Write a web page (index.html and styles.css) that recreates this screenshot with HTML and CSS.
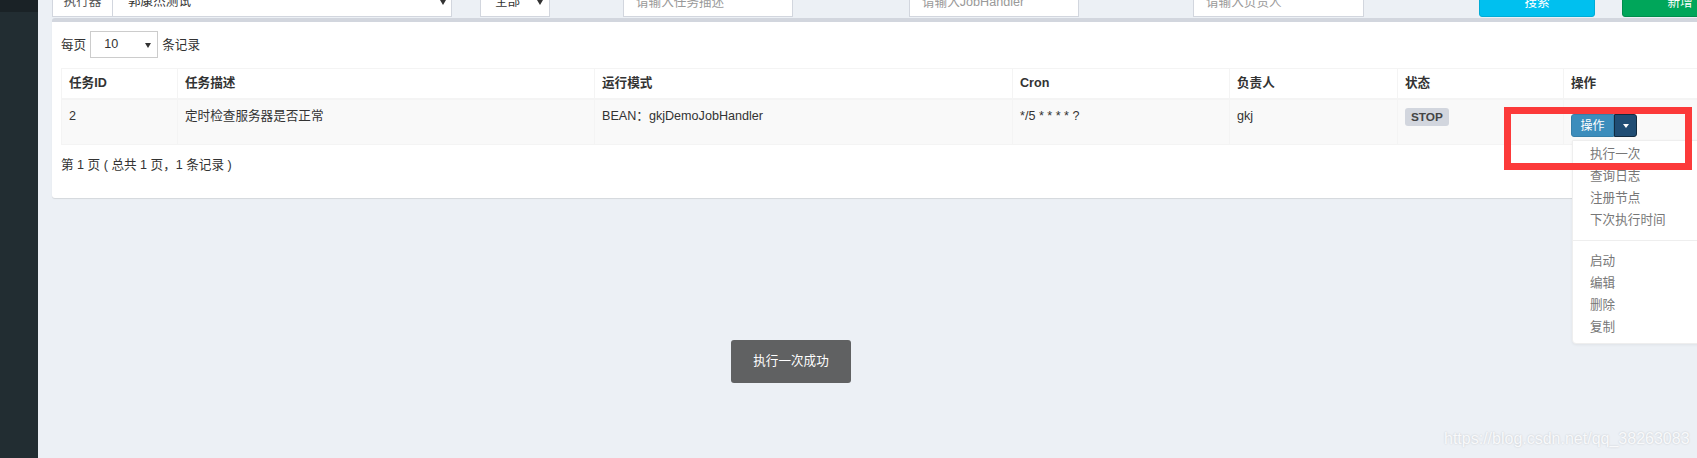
FILE: index.html
```html
<!DOCTYPE html>
<html lang="zh-CN">
<head>
    <meta charset="UTF-8">
    <title>任务管理</title>
    <link rel="stylesheet" href="styles.css">
</head>
<body>
    <div class="wrapper">
        <aside class="sidebar">
            <div class="sidebar-top"></div>
        </aside>
        <main class="content">
            <!-- 查询条件 -->
            <div class="filter-bar">
                <div class="input-group">
                    <span class="addon">执行器</span>
                    <div class="select select-group">郭康杰测试</div>
                </div>
                <div class="select select-status">全部</div>
                <input class="form-control f-desc" type="text" placeholder="请输入任务描述">
                <input class="form-control f-handler" type="text" placeholder="请输入JobHandler">
                <input class="form-control f-author" type="text" placeholder="请输入负责人">
                <button class="btn btn-info">搜索</button>
                <button class="btn btn-success">新增</button>
            </div>

            <div class="box">
                <div class="length-row">
                    <span>每页</span>
                    <div class="select select-sm">10</div>
                    <span>条记录</span>
                </div>
                <table class="job-table">
                    <colgroup>
                        <col class="c-id">
                        <col class="c-desc">
                        <col class="c-mode">
                        <col class="c-cron">
                        <col class="c-author">
                        <col class="c-status">
                        <col>
                    </colgroup>
                    <thead>
                        <tr>
                            <th>任务ID</th>
                            <th>任务描述</th>
                            <th>运行模式</th>
                            <th>Cron</th>
                            <th>负责人</th>
                            <th>状态</th>
                            <th>操作</th>
                        </tr>
                    </thead>
                    <tbody>
                        <tr>
                            <td>2</td>
                            <td>定时检查服务器是否正常</td>
                            <td>BEAN：gkjDemoJobHandler</td>
                            <td>*/5 * * * * ?</td>
                            <td>gkj</td>
                            <td><span class="label">STOP</span></td>
                            <td>
                                <div class="btn-group">
                                    <button class="btn-op">操作</button>
                                    <button class="btn-caret"><span class="caret"></span></button>
                                    <ul class="dropdown-menu">
                                        <li>执行一次</li>
                                        <li>查询日志</li>
                                        <li>注册节点</li>
                                        <li>下次执行时间</li>
                                        <li class="divider"></li>
                                        <li>启动</li>
                                        <li>编辑</li>
                                        <li>删除</li>
                                        <li>复制</li>
                                    </ul>
                                </div>
                            </td>
                        </tr>
                    </tbody>
                </table>
                <div class="table-info">第 1 页 ( 总共 1 页，1 条记录 )</div>
            </div>
        </main>
    </div>

    <div class="mark"></div>
    <div class="toast">执行一次成功</div>
    <div class="watermark">https://blog.csdn.net/qq_38263083</div>
</body>
</html>
```

FILE: styles.css
```css
html, body {
    margin: 0;
    height: 100%;
    overflow: hidden;
}

body {
    background-color: #ecf0f5;
    font-family: "Liberation Sans", Arial, "Noto Sans CJK SC", sans-serif;
    font-size: 12.6px;
    line-height: 18px;
    color: #333;
}

.wrapper {
    display: flex;
    height: 100%;
}

.sidebar {
    flex: 0 0 38px;
    background-color: #222d32;
}

.sidebar-top {
    height: 12px;
    background-color: #1a2226;
}

.content {
    flex: 0 0 1720px;
    padding-left: 14px;
}

/* filter bar, scrolled half out of view */
.filter-bar {
    display: flex;
    align-items: flex-end;
    height: 17px;
}

.filter-bar > * {
    flex: none;
    height: 31px;
    box-sizing: border-box;
}

.input-group {
    display: flex;
}

.addon {
    width: 61px;
    box-sizing: border-box;
    border: 1px solid #d2d6de;
    background-color: #fff;
    color: #555;
    text-align: center;
    line-height: 29px;
}

.select {
    position: relative;
    box-sizing: border-box;
    border: 1px solid #d2d6de;
    background-color: #fff;
    color: #333;
    line-height: 29px;
}

.select::after {
    content: "";
    position: absolute;
    top: 50%;
    margin-top: -2px;
    border-left: 3px solid transparent;
    border-right: 3px solid transparent;
    border-top: 5px solid #333;
}

.select-group {
    width: 339px;
    border-left: none;
    padding-left: 15px;
}

.select-group::after {
    right: 5px;
}

.select-status {
    width: 70px;
    margin-left: 28px;
    padding-left: 14px;
}

.select-status::after {
    right: 6px;
}

.form-control {
    border: 1px solid #d2d6de;
    background-color: #fff;
    padding: 0 12px;
    font: inherit;
    color: #555;
    outline: none;
}

.form-control::placeholder {
    color: #999;
}

.f-desc {
    width: 170px;
    margin-left: 73px;
}

.f-handler {
    width: 170px;
    margin-left: 116px;
}

.f-author {
    width: 171px;
    margin-left: 114px;
}

.btn {
    width: 116px;
    border-radius: 3px;
    font: inherit;
    color: #fff;
    padding: 0;
}

.btn-info {
    margin-left: 115px;
    background-color: #00c0ef;
    border: 1px solid #00acd6;
}

.btn-success {
    margin-left: 27px;
    background-color: #00a65a;
    border: 1px solid #008d4c;
}

/* main box */
.box {
    margin-top: 1px;
    background-color: #fff;
    border-top: 4px solid #d2d6de;
    border-radius: 3px;
    box-shadow: 0 1px 1px rgba(0, 0, 0, 0.1);
    padding: 9px 9px 24px;
}

.length-row {
    display: flex;
    align-items: center;
    gap: 4px;
    height: 27px;
    margin-bottom: 10px;
}

.select-sm {
    width: 68px;
    height: 27px;
    line-height: 25px;
    padding-left: 13px;
    border-color: #ccc;
}

.select-sm::after {
    right: 6px;
}

.job-table {
    width: 100%;
    table-layout: fixed;
    border-collapse: collapse;
    border: 1px solid #f4f4f4;
}

.c-id { width: 116px; }
.c-desc { width: 417px; }
.c-mode { width: 418px; }
.c-cron { width: 217px; }
.c-author { width: 168px; }
.c-status { width: 166px; }

.job-table th,
.job-table td {
    border: 1px solid #f4f4f4;
    text-align: left;
    vertical-align: top;
    white-space: nowrap;
}

.job-table th {
    padding: 5px 7px 6px;
    border-bottom-width: 2px;
    font-weight: bold;
}

.job-table td {
    padding: 7px;
    background-color: #f9f9f9;
}

.label {
    display: inline-block;
    margin-top: 1px;
    padding: 0 6px;
    border-radius: 3px;
    background-color: #d2d6de;
    color: #444;
    font-size: 11.8px;
    font-weight: bold;
    line-height: 18px;
}

.btn-group {
    position: relative;
    display: flex;
    margin-top: 7px;
}

.btn-op,
.btn-caret {
    height: 23px;
    box-sizing: border-box;
    padding: 0;
    font: inherit;
    font-size: 12px;
    color: #fff;
}

.btn-op {
    width: 43px;
    background-color: #3c8dbc;
    border: 1px solid #367fa9;
    border-radius: 3px 0 0 3px;
}

.btn-caret {
    width: 23px;
    background-color: #204d74;
    border: 1px solid #122b40;
    border-radius: 0 3px 3px 0;
    display: flex;
    align-items: center;
    justify-content: center;
}

.caret {
    border-left: 3px solid transparent;
    border-right: 3px solid transparent;
    border-top: 4px solid #fff;
}

.dropdown-menu {
    position: absolute;
    top: 26px;
    left: 1px;
    z-index: 10;
    width: 144px;
    margin: 0;
    padding: 2px 0 5px;
    list-style: none;
    background-color: #fff;
    border: 1px solid #eee;
    border-radius: 0 0 4px 4px;
    box-shadow: 0 1px 3px rgba(0, 0, 0, 0.06);
}

.dropdown-menu li {
    padding: 0 17px;
    line-height: 22px;
    color: #777;
}

.dropdown-menu li.divider {
    height: 1px;
    margin: 9px 0;
    padding: 0;
    background-color: #eee;
}

.table-info {
    margin-top: 11px;
}

/* red marker over the first menu entry */
.mark {
    position: absolute;
    left: 1504px;
    top: 107px;
    width: 188px;
    height: 63px;
    box-sizing: border-box;
    border: 7px solid #fc3a3a;
    z-index: 20;
}

/* layer message */
.toast {
    position: absolute;
    left: 731px;
    top: 340px;
    width: 120px;
    height: 43px;
    line-height: 43px;
    border-radius: 3px;
    background-color: #606162;
    color: #fff;
    text-align: center;
    z-index: 30;
}

.watermark {
    position: absolute;
    left: 1444px;
    top: 430px;
    font-size: 16px;
    line-height: 18px;
    color: #f8f9fb;
    text-shadow: 0 0 2px rgba(0, 0, 0, 0.18);
    white-space: nowrap;
}
```
